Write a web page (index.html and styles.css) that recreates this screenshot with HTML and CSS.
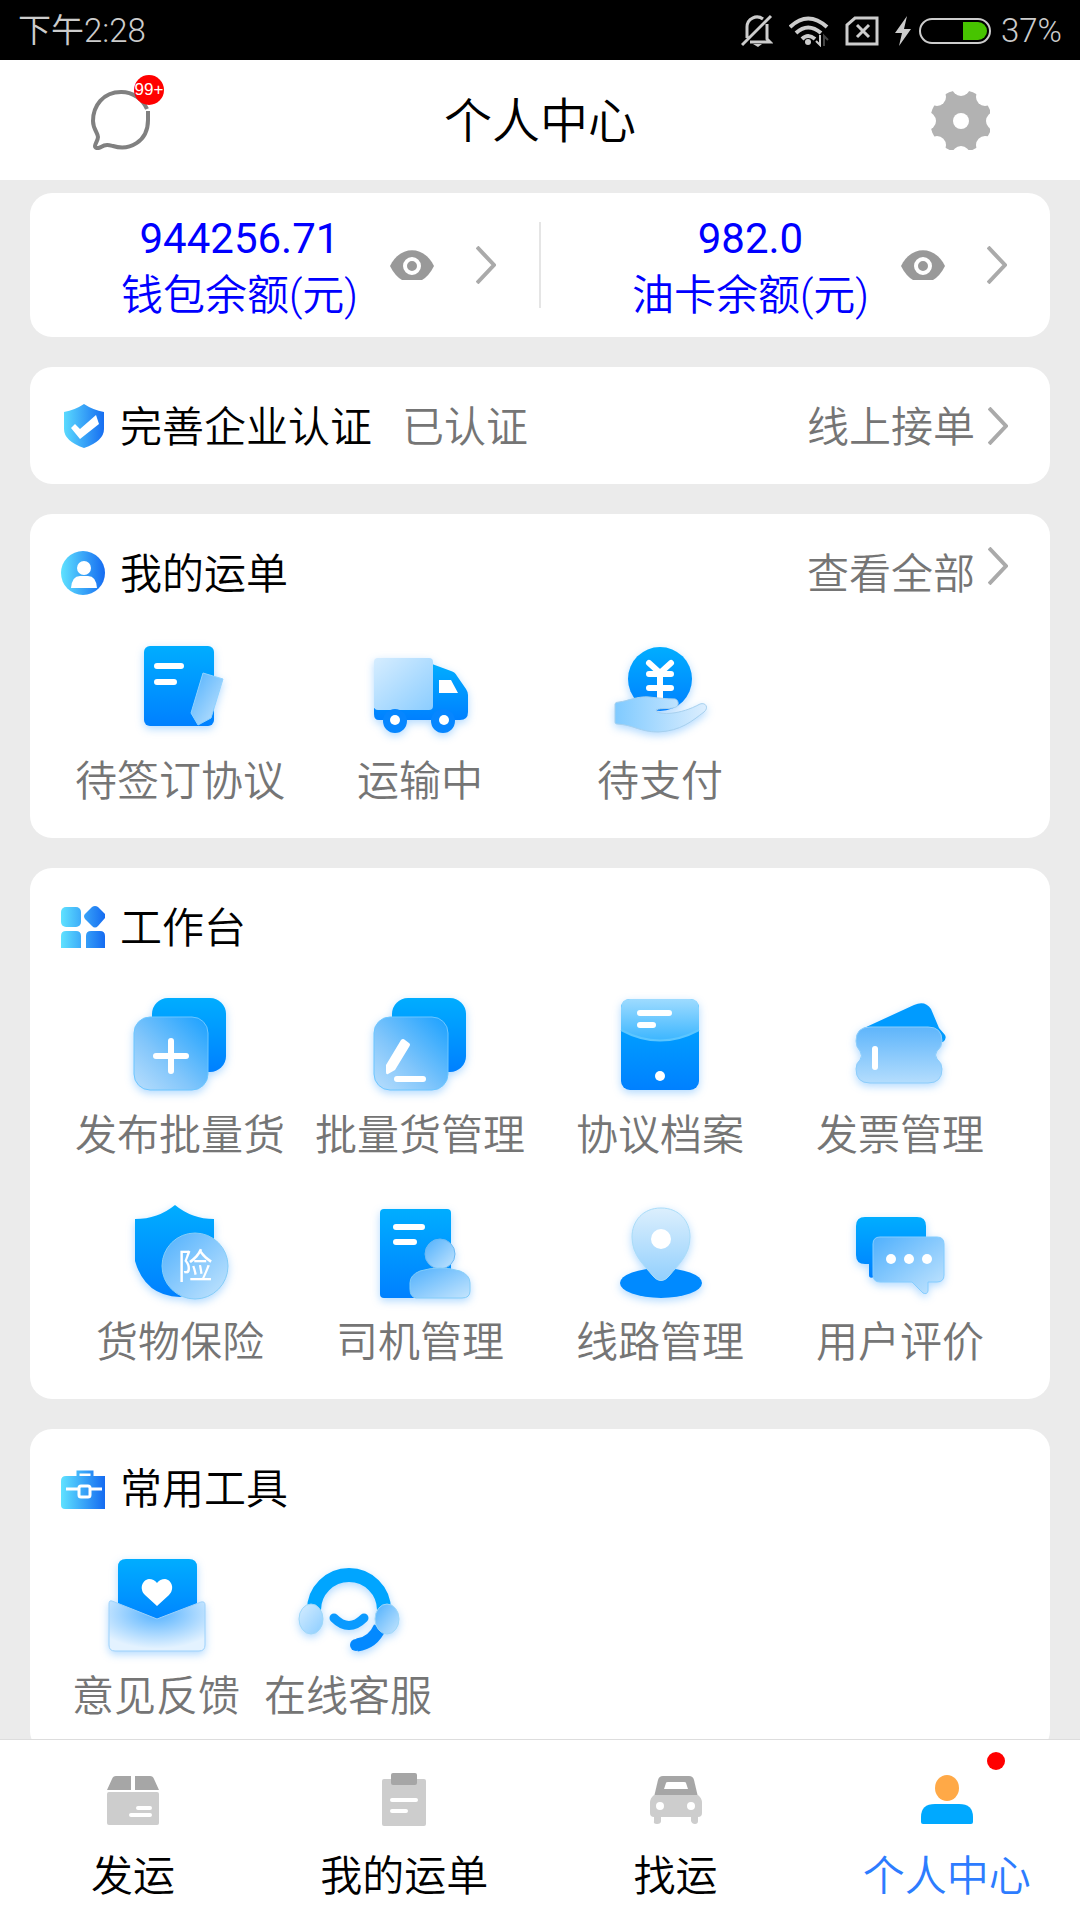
FILE: index.html
```html
<!DOCTYPE html>
<html lang="zh-CN">
<head>
    <meta charset="UTF-8">
    <meta name="viewport" content="width=device-width, initial-scale=1.0">
    <title>个人中心</title>
    <link rel="stylesheet" href="styles.css">
</head>
<body>

<!-- Shared gradients -->
<svg class="defs" aria-hidden="true">
    <defs>
        <linearGradient id="deep" x1="0" y1="0" x2="0" y2="1">
            <stop offset="0" stop-color="#00adff"/>
            <stop offset="1" stop-color="#0080ff"/>
        </linearGradient>
        <linearGradient id="glass" x1="1" y1="0" x2="0" y2="1">
            <stop offset="0" stop-color="#18a0ff"/>
            <stop offset="0.6" stop-color="#82c6fb"/>
            <stop offset="1" stop-color="#b9defc"/>
        </linearGradient>
        <linearGradient id="glass-right" x1="0" y1="0" x2="1" y2="1">
            <stop offset="0" stop-color="#4fb0fd"/>
            <stop offset="1" stop-color="#c5e5fd"/>
        </linearGradient>
        <linearGradient id="pale" x1="0" y1="0" x2="1" y2="1">
            <stop offset="0" stop-color="#d6edff"/>
            <stop offset="1" stop-color="#8bcdff"/>
        </linearGradient>
        <linearGradient id="hand" x1="0" y1="0" x2="1" y2="0">
            <stop offset="0" stop-color="#7fcaff"/>
            <stop offset="1" stop-color="#dceefe"/>
        </linearGradient>
        <linearGradient id="flap" x1="0" y1="0" x2="0" y2="1">
            <stop offset="0" stop-color="#9edbff"/>
            <stop offset="1" stop-color="#3cb6ff"/>
        </linearGradient>
        <linearGradient id="ticket" x1="0" y1="0" x2="0" y2="1">
            <stop offset="0" stop-color="#5eb5fb"/>
            <stop offset="1" stop-color="#b4ddfd"/>
        </linearGradient>
        <linearGradient id="pin" x1="0" y1="0" x2="0" y2="1">
            <stop offset="0" stop-color="#dceffd"/>
            <stop offset="1" stop-color="#93d0fd"/>
        </linearGradient>
        <radialGradient id="mail" cx="0.5" cy="0.25" r="0.7">
            <stop offset="0" stop-color="#55b2ff"/>
            <stop offset="1" stop-color="#e3f2ff"/>
        </radialGradient>
        <linearGradient id="head" gradientUnits="userSpaceOnUse" x1="0" y1="0" x2="44" y2="0">
            <stop offset="0" stop-color="#5fe2ff"/>
            <stop offset="1" stop-color="#156bf1"/>
        </linearGradient>
    </defs>
</svg>

<div class="app">

    <div class="status-bar">
        <span>下午2:28</span>
        <div class="status-icons">
            <svg width="32" height="34" viewBox="0 0 32 34" fill="none" stroke="#ccc" stroke-width="3">
                <path d="M6 24V13a10 10 0 0 1 16-8M26 10v15l3 3H9M1 31 30 2"/>
                <path d="M12 30h9l-4 3z" fill="#ccc" stroke="none"/>
            </svg>
            <svg width="40" height="32" viewBox="0 0 40 32" fill="none" stroke="#ccc" stroke-width="4">
                <path d="M1 12Q19-5 38 12M7 18q12-11 25 0M13 24q6-6 13 0"/>
                <circle cx="19" cy="27" r="3" fill="#ccc" stroke="none"/>
                <path d="M28 27h6" stroke="#000" stroke-width="9"/>
                <path d="M31 20v10l-4-4" stroke-width="2"/>
                <path d="M35 31V21l4 4" stroke="#444" stroke-width="2"/>
            </svg>
            <svg width="34" height="30" viewBox="0 0 34 30" fill="none" stroke="#ccc" stroke-width="3">
                <path d="M10 2h22v26H2V9zM12 9l12 12M24 9 12 21"/>
            </svg>
            <svg width="16" height="30" viewBox="0 0 16 30" fill="#ccc"><path d="M12 0 0 17h7L4 30l12-17H9z"/></svg>
            <svg class="battery" width="72" height="26" viewBox="0 0 72 26">
                <rect x="1" y="1" width="70" height="24" rx="12" fill="none" stroke="#ccc" stroke-width="2"/>
                <path d="M44 4h15a9 9 0 0 1 0 18H44z" fill="#47c400"/>
            </svg>
            <span>37%</span>
        </div>
    </div>

    <header class="header">
        <button class="icon-button" aria-label="消息">
            <svg width="60" height="60" viewBox="0 0 60 60" fill="none" stroke="#808080" stroke-width="4">
                <path d="M57 19A28 28 0 0 0 31 2C13 2 3 16 3 31c0 8 5 12 5 16 0 3-3 7-3 9s3 3 6 1c5-3 8-2 12-1 16 5 35-4 35-26v-9"/>
            </svg>
            <span class="badge">99+</span>
        </button>
        <h1>个人中心</h1>
        <button class="icon-button" aria-label="设置">
            <svg width="60" height="60" viewBox="0 0 60 60">
                <circle cx="31" cy="31" r="31" fill="#b2b2b2"/>
                <g fill="#fff">
                    <circle cx="31" cy="31" r="8"/>
                    <circle cx="31" cy="-3" r="9"/>
                    <circle cx="55" cy="7" r="9"/>
                    <circle cx="65" cy="31" r="9"/>
                    <circle cx="55" cy="55" r="9"/>
                    <circle cx="31" cy="65" r="9"/>
                    <circle cx="7" cy="55" r="9"/>
                    <circle cx="-3" cy="31" r="9"/>
                    <circle cx="7" cy="7" r="9"/>
                </g>
            </svg>
        </button>
    </header>

    <main class="content">

        <section class="card balance">
            <div class="balance-item">
                <div class="balance-text">
                    <p class="amount">944256.71</p>
                    <p>钱包余额(元)</p>
                </div>
                <button class="eye" aria-label="显示钱包余额">
                    <svg width="44" height="30" viewBox="0 0 44 30">
                        <path d="M0 16C10-5 34-5 44 16q-5 10-12 14H12Q5 26 0 16z" fill="#999"/>
                        <circle cx="22" cy="16" r="7" fill="#999" stroke="#fff" stroke-width="4"/>
                    </svg>
                </button>
                <a class="arrow" href="#" aria-label="钱包">
                    <svg width="20" height="38" viewBox="0 0 20 38" fill="none" stroke="#aaa" stroke-width="4"><path d="M1 1l17 18L1 37"/></svg>
                </a>
            </div>
            <div class="balance-item">
                <div class="balance-text">
                    <p class="amount">982.0</p>
                    <p>油卡余额(元)</p>
                </div>
                <button class="eye" aria-label="显示油卡余额">
                    <svg width="44" height="30" viewBox="0 0 44 30">
                        <path d="M0 16C10-5 34-5 44 16q-5 10-12 14H12Q5 26 0 16z" fill="#999"/>
                        <circle cx="22" cy="16" r="7" fill="#999" stroke="#fff" stroke-width="4"/>
                    </svg>
                </button>
                <a class="arrow" href="#" aria-label="油卡">
                    <svg width="20" height="38" viewBox="0 0 20 38" fill="none" stroke="#aaa" stroke-width="4"><path d="M1 1l17 18L1 37"/></svg>
                </a>
            </div>
        </section>

        <section class="card">
            <div class="card-head">
                <svg width="44" height="44" viewBox="0 0 44 44">
                    <path d="M23 0q9 6 20 8v17q0 12-20 19Q3 37 3 25V8q11-2 20-8z" fill="url(#head)"/>
                    <path d="M10 24l4-4 5 5 16-14 3 9-19 15z" fill="#fff"/>
                </svg>
                <h2>完善企业认证</h2>
                <span class="state">已认证</span>
                <a class="more" href="#">线上接单
                    <svg width="20" height="38" viewBox="0 0 20 38" fill="none" stroke="#aaa" stroke-width="4"><path d="M1 1l17 18L1 37"/></svg>
                </a>
            </div>
        </section>

        <section class="card">
            <div class="card-head">
                <svg width="44" height="44" viewBox="0 0 44 44">
                    <circle cx="22" cy="22" r="22" fill="url(#head)"/>
                    <circle cx="23" cy="17" r="7" fill="#fff"/>
                    <path d="M10 37q1-12 9-12h8q8 0 9 12z" fill="#fff"/>
                </svg>
                <h2>我的运单</h2>
                <a class="more more-top" href="#">查看全部
                    <svg width="20" height="38" viewBox="0 0 20 38" fill="none" stroke="#aaa" stroke-width="4"><path d="M1 1l17 18L1 37"/></svg>
                </a>
            </div>
            <div class="tiles">
                <a class="tile" href="#">
                    <svg viewBox="0 0 105 105">
                        <rect x="16" y="8" width="70" height="80" rx="6" fill="url(#deep)"/>
                        <path d="M29 28h24M29 44h17" class="line"/>
                        <path d="M75 35l20 6-12 39-13 7-7-12z" fill="url(#glass-right)" stroke="#8fd2ff"/>
                    </svg>
                    <span>待签订协议</span>
                </a>
                <a class="tile" href="#">
                    <svg viewBox="0 0 105 105">
                        <path d="M64 26l19 7q4 1 6 5l9 13q2 3 2 6v17q0 8-8 8H11q-5 0-5-6v-6h58z" fill="url(#deep)"/>
                        <rect x="6" y="20" width="59" height="52" rx="4" fill="url(#pale)"/>
                        <g fill="#0686ff">
                            <circle cx="27" cy="83" r="12"/>
                            <circle cx="75" cy="83" r="12"/>
                        </g>
                        <g fill="#fff">
                            <circle cx="27" cy="82" r="5"/>
                            <circle cx="76" cy="82" r="5"/>
                            <path d="M71 42h12l7 13H71z"/>
                        </g>
                    </svg>
                    <span>运输中</span>
                </a>
                <a class="tile" href="#">
                    <svg viewBox="0 0 105 105">
                        <circle cx="52" cy="41" r="32" fill="url(#deep)"/>
                        <path d="M41 25l11 10 11-10M41 36h22M41 50h22M52 36v30" class="line"/>
                        <path d="M7 66q0-2 4-2c9-1 18-6 30-5 10 1 18 2 26 2 4 1 4 7 1 8-6 3-20 0-20 4 4 4 24 4 44-7 6-2 9 4 4 8-12 9-23 19-46 20-18 0-24-7-41-8-2 0-2-1-2-3z" fill="url(#hand)" stroke="#a6d0ee"/>
                    </svg>
                    <span>待支付</span>
                </a>
            </div>
        </section>

        <section class="card">
            <div class="card-head">
                <svg width="44" height="44" viewBox="0 0 44 44" fill="url(#head)">
                    <rect x="0" y="2" width="20" height="20" rx="5"/>
                    <path d="M31 2q3-2 6 0l7 7v4l-7 8q-3 3-6 0l-7-7q-2-3 0-5z"/>
                    <path d="M5 26h10q5 0 5 5v12H0V31q0-5 5-5zM30 26h9q5 0 5 5v12H25V31q0-5 5-5z"/>
                </svg>
                <h2>工作台</h2>
            </div>
            <div class="tiles">
                <a class="tile" href="#">
                    <svg viewBox="0 0 105 105">
                        <rect x="24" y="6" width="74" height="74" rx="16" fill="url(#deep)"/>
                        <rect x="6" y="25" width="74" height="73" rx="16" fill="url(#glass)" stroke="#6cc6ff"/>
                        <path d="M28 64h30M43 49v30" class="line"/>
                    </svg>
                    <span>发布批量货</span>
                </a>
                <a class="tile" href="#">
                    <svg viewBox="0 0 105 105">
                        <rect x="24" y="6" width="74" height="74" rx="16" fill="url(#deep)"/>
                        <rect x="6" y="25" width="74" height="73" rx="16" fill="url(#glass)" stroke="#6cc6ff"/>
                        <path d="M33 48q2-2 4 0l4 3q2 1 0 4L27 78l-7 4q-2 1-2-2v-7z" fill="#fff"/>
                        <path d="M29 87h26" class="line"/>
                    </svg>
                    <span>批量货管理</span>
                </a>
                <a class="tile" href="#">
                    <svg viewBox="0 0 105 105">
                        <rect x="13" y="7" width="78" height="91" rx="9" fill="url(#deep)"/>
                        <path d="M13 38V16q0-9 9-9h60q9 0 9 9v22q-39 21-78 0z" fill="url(#flap)"/>
                        <path d="M13 38q39 21 78 0" fill="none" stroke="#5cc6ff" stroke-width="2"/>
                        <path d="M32 21h29M32 33h13" class="line"/>
                        <circle cx="52" cy="84" r="5" fill="#fff"/>
                    </svg>
                    <span>协议档案</span>
                </a>
                <a class="tile" href="#">
                    <svg viewBox="0 0 105 105">
                        <path d="M16 36l50-23q11-5 17 4l8 19 6 7q2 4-2 7H70z" fill="#009bff"/>
                        <path d="M22 35h58q14 0 14 14 0 6-5 10-3 4 0 8 5 4 5 10 0 14-14 14H22Q8 91 8 77q0-6 4-9 3-4 0-9-4-4-4-10 0-14 14-14z" fill="url(#ticket)" stroke="#8bcdfb"/>
                        <path d="M27 57v18" class="line"/>
                    </svg>
                    <span>发票管理</span>
                </a>
                <a class="tile" href="#">
                    <svg viewBox="0 0 105 105">
                        <path d="M47 6q17 14 39 14v42q-5 26-34 36Q17 97 7 62V20q23 0 40-14z" fill="url(#deep)"/>
                        <circle cx="67" cy="67" r="33" fill="url(#glass-right)" stroke="#84cdf8"/>
                        <text x="67" y="80" text-anchor="middle" class="seal">险</text>
                    </svg>
                    <span>货物保险</span>
                </a>
                <a class="tile" href="#">
                    <svg viewBox="0 0 105 105">
                        <rect x="12" y="10" width="71" height="89" rx="4" fill="url(#deep)"/>
                        <path d="M28 28h26M28 43h18" class="line"/>
                        <circle cx="72" cy="55" r="15" fill="url(#glass-right)" stroke="#6bb9f3"/>
                        <path d="M42 84q0-8 10-12 20-6 40 0 10 4 10 12v8q0 7-8 7H48q-6-1-6-9z" fill="url(#glass-right)" stroke="#84cdf8"/>
                    </svg>
                    <span>司机管理</span>
                </a>
                <a class="tile" href="#">
                    <svg viewBox="0 0 105 105">
                        <ellipse cx="53" cy="84" rx="41" ry="15" fill="#008aff"/>
                        <path d="M53 9c18 0 29 13 29 29 0 18-12 28-21 39-5 6-11 6-16 0-9-11-21-21-21-39C24 22 35 9 53 9z" fill="url(#pin)" stroke="#a9dcf8"/>
                        <circle cx="53" cy="40" r="10" fill="#fff"/>
                    </svg>
                    <span>线路管理</span>
                </a>
                <a class="tile" href="#">
                    <svg viewBox="0 0 105 105">
                        <path d="M17 18h52q9 0 9 9v38H30L26 78q-5 2-5-2V65h-4q-9 0-9-9V27q0-9 9-9z" fill="url(#deep)"/>
                        <path d="M32 38h57q7 0 7 7v31q0 7-7 7h-9v9q-1 4-5 2L64 83H32q-7 0-7-7V45q0-7 7-7z" fill="url(#glass-right)" stroke="#84cdff"/>
                        <g fill="#fff">
                            <circle cx="43" cy="60" r="5"/>
                            <circle cx="61" cy="60" r="5"/>
                            <circle cx="79" cy="60" r="5"/>
                        </g>
                    </svg>
                    <span>用户评价</span>
                </a>
            </div>
        </section>

        <section class="card">
            <div class="card-head">
                <svg width="44" height="44" viewBox="0 0 44 44">
                    <path d="M17 12V6h14v6" fill="none" stroke="url(#head)" stroke-width="3"/>
                    <path d="M5 10h39v33H4q-4 0-4-4V15q0-5 5-5z" fill="url(#head)"/>
                    <path d="M5 23h13M29 23h12" stroke="#fff" stroke-width="3"/>
                    <rect x="18" y="20" width="11" height="11" rx="2" fill="none" stroke="#fff" stroke-width="3"/>
                </svg>
                <h2>常用工具</h2>
            </div>
            <div class="tiles tiles-five">
                <a class="tile" href="#">
                    <svg viewBox="0 0 105 105">
                        <path d="M22 6h63q8 0 8 8v60H14V14q0-8 8-8z" fill="url(#deep)"/>
                        <path d="M8 48l45 18 44-17q4-1 4 3v40q0 6-6 6H11q-6 0-6-6V51q0-4 3-3z" fill="url(#mail)" stroke="#9dd2fb"/>
                        <path d="M53 53L41 42c-6-6-3-15 4-16q5 0 8 4 3-4 8-4c7 1 10 10 4 16z" fill="#fff"/>
                    </svg>
                    <span>意见反馈</span>
                </a>
                <a class="tile" href="#">
                    <svg viewBox="0 0 105 105" fill="none">
                        <path d="M18 57a35 35 0 0 1 70 0" stroke="#00a5ff" stroke-width="14"/>
                        <path d="M38 65q15 15 30 0" stroke="#0a9aff" stroke-width="9" stroke-linecap="round"/>
                        <path d="M84 74q-7 16-23 18" stroke="#0389ff" stroke-width="13"/>
                        <circle cx="60" cy="92" r="6" fill="#0389ff"/>
                        <ellipse cx="15" cy="66" rx="12" ry="15" fill="url(#pale)" stroke="#9dd7f8"/>
                        <ellipse cx="91" cy="66" rx="12" ry="15" fill="url(#glass-right)" stroke="#9dd7f8"/>
                    </svg>
                    <span>在线客服</span>
                </a>
            </div>
        </section>

    </main>

    <nav class="tab-bar">
        <a class="tab" href="#">
            <svg width="56" height="56" viewBox="0 0 56 56">
                <path d="M11 4h15v14H2l5-11q1-3 4-3zM30 4h15q3 0 4 3l5 11H30z" fill="#a6a6a6"/>
                <rect x="2" y="20" width="52" height="33" rx="2" fill="#cdcdcd"/>
                <path d="M33 36h12M26 43h19" stroke="#fff" stroke-width="4" stroke-linecap="round"/>
            </svg>
            <span>发运</span>
        </a>
        <a class="tab" href="#">
            <svg width="56" height="56" viewBox="0 0 56 56">
                <rect x="6" y="7" width="44" height="47" rx="2" fill="#cdcdcd"/>
                <rect x="15" y="1" width="26" height="12" rx="2" fill="#a6a6a6"/>
                <path d="M16 28h24M16 39h14" stroke="#fff" stroke-width="4" stroke-linecap="round"/>
            </svg>
            <span>我的运单</span>
        </a>
        <a class="tab" href="#">
            <svg width="56" height="56" viewBox="0 0 56 56">
                <path d="M6 25l4-17q1-4 5-4h26q4 0 5 4l4 17z" fill="#a6a6a6"/>
                <path d="M16 17l2-6q0-1 2-1h16q2 0 2 1l2 6z" fill="#fff"/>
                <path d="M6 23h44q4 3 4 8v10q0 4-4 4v4q0 3-3 3t-4-3v-4H13v4q0 3-4 3t-3-3v-4q-4 0-4-4V31q0-5 4-8z" fill="#cdcdcd"/>
                <circle cx="12" cy="34" r="4" fill="#fff"/>
                <circle cx="43" cy="34" r="4" fill="#fff"/>
            </svg>
            <span>找运</span>
        </a>
        <a class="tab active" href="#">
            <svg width="56" height="56" viewBox="0 0 56 56">
                <ellipse cx="28" cy="16" rx="12" ry="13" fill="#ffa947"/>
                <path d="M2 50v-5q0-13 14-13h24q14 0 14 13v5q0 2-2 2H4q-2 0-2-2z" fill="#00a9ff"/>
            </svg>
            <span>个人中心</span>
            <i class="dot"></i>
        </a>
    </nav>

</div>

</body>
</html>
```
FILE: styles.css
```css
* {
    box-sizing: border-box;
}
body {
    margin: 0;
    font-family: Roboto, "Noto Sans CJK SC", sans-serif;
    font-size: 42px;
    font-weight: 350;
    line-height: 50px;
    color: #000;
    background-color: #ebebeb;
}
h1, h2, p {
    margin: 0;
    font-weight: 350;
}
a {
    color: inherit;
    text-decoration: none;
}
button {
    padding: 0;
    border: none;
    background: none;
    cursor: pointer;
}
svg {
    display: block;
    flex-shrink: 0;
}
.defs {
    position: absolute;
    width: 0;
    height: 0;
}
.app {
    display: flex;
    flex-direction: column;
    height: 100vh;
}

/* Phone status bar */
.status-bar {
    display: flex;
    justify-content: space-between;
    align-items: center;
    height: 60px;
    padding: 2px 18px 0;
    font-size: 33px;
    color: #ccc;
    background-color: #000;
}
.status-icons {
    display: flex;
    align-items: center;
    gap: 16px;
}
.battery {
    margin: 0 -6px 0 -8px;
}

/* Title bar */
.header {
    display: flex;
    justify-content: space-between;
    align-items: center;
    height: 120px;
    padding: 0 90px;
    background-color: #fff;
}
.header h1 {
    padding-top: 4px;
    font-size: 48px;
}
.icon-button {
    position: relative;
}
.badge {
    position: absolute;
    top: -15px;
    right: -14px;
    width: 30px;
    height: 30px;
    border-radius: 50%;
    font-size: 17px;
    font-weight: 400;
    line-height: 30px;
    text-align: center;
    color: #fff;
    background-color: #f00;
}

.content {
    flex: 1;
    min-height: 0;
    padding: 13px 30px 30px;
    overflow-y: auto;
    scrollbar-width: none;
}
.card {
    margin-bottom: 30px;
    border-radius: 22px;
    background-color: #fff;
}

/* Balances */
.balance {
    display: flex;
    color: #00f;
}
.balance-item {
    display: flex;
    flex: 1;
    align-items: center;
    justify-content: flex-end;
    height: 144px;
    padding-right: 43px;
}
.balance-item:first-child {
    border-right: 2px solid;
    border-image: linear-gradient(transparent 30px, #e5e5e5 30px, #e5e5e5 114px, transparent 114px) 1;
}
.balance-text {
    padding-top: 4px;
    line-height: 57px;
    text-align: center;
}
.amount {
    font-weight: 400;
}
.eye {
    margin: 0 42px 0 32px;
}

/* Card title row */
.card-head {
    display: flex;
    align-items: center;
    height: 117px;
    padding: 0 42px 0 31px;
}
.card-head h2 {
    margin-left: 15px;
    padding-top: 4px;
    font-size: 42px;
}
.state {
    margin-left: 30px;
    padding-top: 4px;
    color: #757575;
}
.more {
    display: flex;
    align-items: center;
    gap: 13px;
    margin-left: auto;
    padding-top: 4px;
    color: #757575;
}
.more svg {
    margin-bottom: 4px;
}
.more-top svg {
    margin-bottom: 18px;
}

/* Icon grid */
.tiles {
    display: grid;
    grid-template-columns: repeat(4, 1fr);
    row-gap: 38px;
    padding: 7px 30px 31px;
}
.tiles-five {
    grid-template-columns: repeat(5, 1fr);
}
.tile {
    display: flex;
    flex-direction: column;
    align-items: center;
    gap: 14px;
    white-space: nowrap;
    color: #757575;
}
.tile svg {
    width: 105px;
    height: 105px;
    filter: drop-shadow(0 3px 4px rgba(0, 132, 255, 0.3));
}
.line {
    fill: none;
    stroke: #fff;
    stroke-width: 6px;
    stroke-linecap: round;
}
.seal {
    font-size: 35px;
    font-weight: 400;
    fill: #fff;
}

/* Bottom tabs */
.tab-bar {
    display: flex;
    gap: 5px;
    height: 181px;
    border-top: 1px solid #ddd;
    background-color: #fff;
}
.tab {
    position: relative;
    display: flex;
    flex: 1;
    flex-direction: column;
    align-items: center;
    gap: 24px;
    padding-top: 32px;
}
.tab.active {
    color: #2d7cff;
}
.dot {
    position: absolute;
    top: 12px;
    right: 75px;
    width: 18px;
    height: 18px;
    border-radius: 50%;
    background-color: #f00;
}
```
